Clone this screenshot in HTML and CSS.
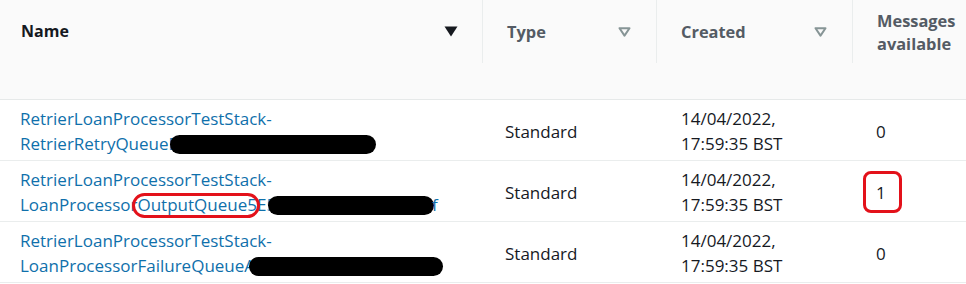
FILE: index.html
```html
<!DOCTYPE html>
<html>
<head>
<meta charset="utf-8">
<link rel="stylesheet" href="styles.css">
</head>
<body>
<div class="table">
  <div class="head">
    <div class="hcell name-h"><div class="hin"><span class="ht dark">Name</span>
      <svg class="sort" width="14" height="11" viewBox="0 0 14 11"><path d="M0.5 0.5 H13.5 L7 10.5 Z" fill="#16191f"/></svg></div></div>
    <div class="hcell"><div class="hin sep"><span class="ht">Type</span>
      <svg class="sort" width="13" height="10" viewBox="0 0 13 10"><path d="M1.5 1.2 H11.5 L6.5 8.6 Z" fill="none" stroke="#879596" stroke-width="2" stroke-linejoin="round"/></svg></div></div>
    <div class="hcell"><div class="hin sep"><span class="ht">Created</span>
      <svg class="sort" width="13" height="10" viewBox="0 0 13 10"><path d="M1.5 1.2 H11.5 L6.5 8.6 Z" fill="none" stroke="#879596" stroke-width="2" stroke-linejoin="round"/></svg></div></div>
    <div class="hcell"><div class="hin sep msg"><span class="ht">Messages available</span></div></div>
  </div>

  <div class="row">
    <div class="cell name"><a class="link">RetrierLoanProcessorTestStack-<br>RetrierRetryQueueE<span class="redact r1"></span></a></div>
    <div class="cell">Standard</div>
    <div class="cell date">14/04/2022,<br>17:59:35 BST</div>
    <div class="cell num"><span>0</span></div>
  </div>
  <div class="row">
    <div class="cell name"><a class="link">RetrierLoanProcessorTestStack-<br>LoanProcessor<span class="circled">OutputQueue5</span>E5<span class="redact r2"></span>f</a></div>
    <div class="cell">Standard</div>
    <div class="cell date">14/04/2022,<br>17:59:35 BST</div>
    <div class="cell num"><span class="boxed">1</span></div>
  </div>
  <div class="row">
    <div class="cell name"><a class="link">RetrierLoanProcessorTestStack-<br>LoanProcessorFailureQueueA<span class="redact r3"></span></a></div>
    <div class="cell">Standard</div>
    <div class="cell date">14/04/2022,<br>17:59:35 BST</div>
    <div class="cell num"><span>0</span></div>
  </div>
</div>
</body>
</html>
```

FILE: styles.css
```css
html, body {
  margin: 0;
  padding: 0;
  background: #ffffff;
}
body {
  font-family: "Open Sans", "Noto Sans", Arial, sans-serif;
  font-size: 17px;
  color: #16191f;
  overflow: hidden;
}
.table {
  width: 966px;
}
.head {
  display: grid;
  grid-template-columns: 482px 174px 196px 1fr;
  height: 99px;
  background: #fafafa;
  border-bottom: 1px solid #e6e9e9;
}
.hcell {
  display: flex;
  flex-direction: column;
}
.hin {
  height: 63px;
  display: flex;
  align-items: center;
  justify-content: space-between;
  padding: 0 25px 0 24px;
}
.name-h .hin {
  padding: 0 24px 0 21px;
}
.sep {
  border-left: 1px solid #eaeded;
}
.ht {
  font-size: 16.4px;
  font-weight: 700;
  color: #545b64;
  line-height: 23px;
}
.ht.dark {
  font-size: 16px;
  color: #16191f;
}
.msg {
  padding-right: 0;
}
.sort {
  display: block;
}
.row {
  display: grid;
  grid-template-columns: 482px 174px 196px 1fr;
  height: 60px;
  border-bottom: 1px solid #eaeded;
  line-height: 25px;
}
.cell {
  display: flex;
  flex-direction: column;
  justify-content: center;
  align-items: flex-start;
  padding-left: 23px;
  padding-top: 2px;
}
.cell.name {
  padding-left: 20px;
}
.cell.date {
  padding-left: 25px;
}
.cell.num {
  padding-left: 24px;
}
.link {
  color: #0f70ab;
  white-space: nowrap;
}
.redact {
  display: inline-block;
  height: 19px;
  background: #000;
  border-radius: 10px;
  vertical-align: -4px;
}
.r1 {
  width: 206px;
  margin-left: -8px;
}
.r2 {
  width: 166px;
  margin-left: -8px;
  margin-right: -2px;
}
.r3 {
  width: 194px;
  margin-left: -6px;
}
.circled {
  position: relative;
}
.circled::after {
  content: "";
  position: absolute;
  left: -5px;
  right: -3px;
  top: 0;
  bottom: -2px;
  border: 3px solid #e3111a;
  border-radius: 14px;
}
.boxed {
  position: relative;
  display: inline-block;
}
.boxed::after {
  content: "";
  position: absolute;
  left: -13px;
  right: -16px;
  top: -9px;
  bottom: -8px;
  border: 3px solid #e3111a;
  border-radius: 8px;
}
```
